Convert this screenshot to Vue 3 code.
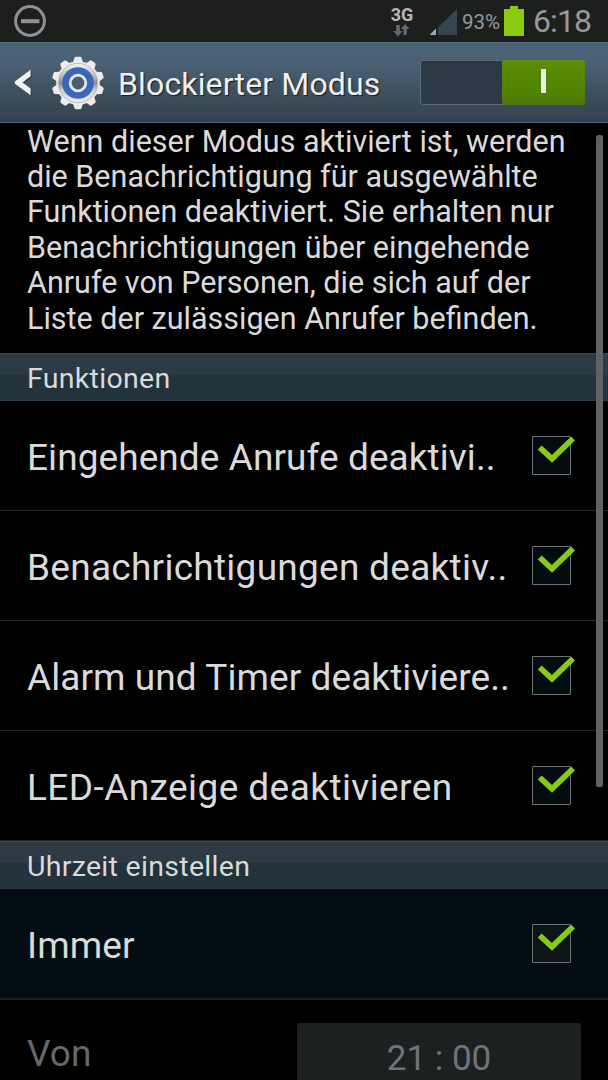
<template>
  <div class="screen">
    <header class="status-bar">
      <svg class="status-block" viewBox="0 0 34 34">
        <circle cx="17" cy="17" r="14.4" fill="none" stroke="#8f9193" stroke-width="3" />
        <rect x="8" y="15.2" width="18.4" height="4" fill="#8f9193" />
      </svg>
      <div class="network">
        <span class="network-type">3G</span>
        <svg class="network-arrows" viewBox="0 0 18 13">
          <path d="M3.2 1h3.6v6H9.6L5 12.4.4 7h2.8z" fill="#64696c" />
          <path d="M10.4 11h3.4V5h2.8L12.1 0 7.8 5h2.6z" fill="#64696c" />
        </svg>
      </div>
      <svg class="signal" viewBox="0 0 29 28">
        <path d="M9 27V19.5L28 1v26z" fill="#354551" />
        <path d="M.5 27L7 20.5V27z" fill="#a5a7a8" />
      </svg>
      <span class="percent">93%</span>
      <svg class="battery" viewBox="0 0 20 30">
        <path d="M6 0h8v3h6v27H0V3h6z" fill="#8acb12" />
      </svg>
      <span class="clock">6:18</span>
    </header>

    <div class="action-bar">
      <svg class="back" viewBox="0 0 18 28">
        <path d="M17.3 1.5v6.8L9 14.5l8.3 5.7v6.8L1.3 15.6v-2z" fill="#24313b" />
        <path d="M16.6 .7v6.6L8.6 13.6l8 6V26.2L.8 14.8v-2.2z" fill="#f2f2f2" />
      </svg>
      <svg class="gear" viewBox="-27 -27 54 54">
        <defs>
          <linearGradient id="metal" x1="0" y1="0" x2="0" y2="1">
            <stop offset="0" stop-color="#f4f4f4" />
            <stop offset="0.3" stop-color="#c2c2c2" />
            <stop offset="0.5" stop-color="#8e8e8e" />
            <stop offset="0.7" stop-color="#d0d0d0" />
            <stop offset="1" stop-color="#f0f0f0" />
          </linearGradient>
        </defs>
        <circle r="21.8" fill="#ececec" />
        <path
          v-for="n in 10"
          :key="n"
          d="M-5.2 -20L-3.4 -25.4Q-3 -26.2 -2 -26.2H2Q3 -26.2 3.4 -25.4L5.2 -20z"
          fill="#ececec"
          :transform="`rotate(${n * 36})`"
        />
        <circle r="19.7" fill="url(#metal)" stroke="#b4b4b4" stroke-width="0.8" />
        <circle r="15.8" fill="#3c66bc" />
        <circle r="7.8" fill="#4b5f70" stroke="#e6e6e6" stroke-width="2.8" />
      </svg>
      <h1 class="title">Blockierter Modus</h1>
      <button class="switch" type="button" @click="enabled = !enabled">
        <span class="switch-thumb" :class="{ off: !enabled }"><i></i></span>
      </button>
    </div>

    <main class="content">
      <p class="description">
        <span v-for="line in description" :key="line">{{ line }}</span>
      </p>

      <h2 class="section">Funktionen</h2>
      <div v-for="item in features" :key="item.label" class="row" @click="item.checked = !item.checked">
        <span class="label" :style="{ letterSpacing: item.spacing + 'px' }">{{ item.label }}</span>
        <span class="checkbox">
          <svg v-if="item.checked" viewBox="0 0 46 42">
            <path d="M8.7 12.5L21 23.8L42 3.5" fill="none" stroke="#86cc14" stroke-width="5.6" />
          </svg>
        </span>
      </div>

      <h2 class="section">Uhrzeit einstellen</h2>
      <div class="row always" @click="always = !always">
        <span class="label">Immer</span>
        <span class="checkbox">
          <svg v-if="always" viewBox="0 0 46 42">
            <path d="M8.7 12.5L21 23.8L42 3.5" fill="none" stroke="#86cc14" stroke-width="5.6" />
          </svg>
        </span>
      </div>
      <div class="from">
        <span class="label">Von</span>
        <span class="time-button">21 : 00</span>
      </div>
    </main>

    <div class="scrollbar"></div>
  </div>
</template>

<script setup>
import { ref } from 'vue';

const enabled = ref(true);
const always = ref(true);

const description = [
  'Wenn dieser Modus aktiviert ist, werden',
  'die Benachrichtigung für ausgewählte',
  'Funktionen deaktiviert. Sie erhalten nur',
  'Benachrichtigungen über eingehende',
  'Anrufe von Personen, die sich auf der',
  'Liste der zulässigen Anrufer befinden.',
];

const features = ref([
  { label: 'Eingehende Anrufe deaktivi..', checked: true, spacing: 0.07 },
  { label: 'Benachrichtigungen deaktiv..', checked: true, spacing: 0.27 },
  { label: 'Alarm und Timer deaktiviere..', checked: true, spacing: 0.07 },
  { label: 'LED-Anzeige deaktivieren', checked: true, spacing: 0.42 },
]);
</script>

<style>
body {
  background: #000;
}
</style>

<style scoped>
.screen {
  position: relative;
  width: 608px;
  height: 1080px;
  overflow: hidden;
  background: #000;
  color: #dadada;
  font-family: Roboto, sans-serif;
}
.status-bar {
  display: flex;
  align-items: flex-start;
  box-sizing: border-box;
  height: 42px;
  padding-left: 13px;
  background: #1d1f1f;
  color: #97999b;
}
.status-block {
  width: 34px;
  height: 34px;
  margin-top: 4px;
}
.network {
  display: flex;
  flex-direction: column;
  align-items: center;
  width: 26px;
  margin: 6px 0 0 342px;
}
.network-type {
  font-size: 18px;
  font-weight: 700;
  line-height: 18px;
  color: #b6b8b9;
}
.network-arrows {
  width: 18px;
  height: 13px;
}
.signal {
  width: 29px;
  height: 28px;
  margin: 8px 0 0 14px;
}
.percent {
  width: 38px;
  margin: 10px 0 0 4px;
  font-size: 20.5px;
  line-height: 24px;
  white-space: nowrap;
}
.battery {
  width: 20px;
  height: 30px;
  margin: 6px 0 0 4px;
}
.clock {
  margin: 3px 0 0 9px;
  font-size: 32px;
  line-height: 36px;
  letter-spacing: -0.9px;
}
.action-bar {
  display: flex;
  align-items: center;
  box-sizing: border-box;
  height: 81px;
  padding: 0 23px 0 14px;
  background: linear-gradient(#4c6478 0%, #4a6175 25%, #3f515f 60%, #33424f 100%);
  border-top: 1px solid #566f84;
  border-bottom: 1px solid #46617a;
}
.back {
  flex: none;
  width: 18px;
  height: 28px;
}
.gear {
  flex: none;
  width: 54px;
  height: 54px;
  margin-left: 18.5px;
}
.title {
  flex: 1;
  margin: 2px 0 0 13.5px;
  font-size: 32px;
  font-weight: 400;
  line-height: 40px;
  letter-spacing: 0.15px;
  color: #f0f0f0;
  text-shadow: 1px 1px 1px #111a20;
  white-space: nowrap;
}
.switch {
  display: flex;
  justify-content: flex-end;
  box-sizing: border-box;
  width: 165px;
  height: 45px;
  padding: 0;
  background: #2d3a45;
  border: 1px solid #5e6a72;
  border-radius: 3px;
}
.switch-thumb {
  display: flex;
  align-items: center;
  justify-content: center;
  width: 83px;
  height: 45px;
  margin: -1px -1px 0 0;
  background: linear-gradient(#5d9107 0%, #558800 30%, #528300 75%, #4a720a 100%);
  border-radius: 3px;
}
.switch-thumb.off {
  margin-right: auto;
  background: #4a5560;
}
.switch-thumb i {
  width: 5px;
  height: 24px;
  margin-bottom: 3px;
  background: #ececec;
}
.description {
  box-sizing: border-box;
  margin: 0;
  height: 230px;
  padding: 0.6px 0 0 27px;
  font-size: 30.5px;
  line-height: 35.4px;
  white-space: nowrap;
}
.description span {
  display: block;
}
.section {
  box-sizing: border-box;
  height: 48px;
  margin: 0;
  padding-left: 27px;
  font-size: 28.5px;
  font-weight: 400;
  line-height: 49px;
  letter-spacing: 0.3px;
  background: linear-gradient(#2d3944 0%, #2d3944 44%, #23333c 46%, #23333c 100%);
  border-top: 1px solid #344957;
  border-bottom: 1px solid #2b3943;
}
.row {
  display: flex;
  align-items: center;
  justify-content: space-between;
  box-sizing: border-box;
  height: 110px;
  padding: 0 37px 0 27px;
  border-bottom: 1px solid #242424;
}
.label {
  padding-top: 5px;
  font-size: 37px;
  line-height: 44px;
  letter-spacing: 0.1px;
  white-space: nowrap;
}
.checkbox {
  box-sizing: border-box;
  flex: none;
  width: 39px;
  height: 39px;
  background: #050c0f;
  border: 1px solid #6d7275;
  border-radius: 1px;
}
.checkbox svg {
  display: block;
  width: 46px;
  height: 42px;
  margin: -2px 0 0 -2px;
}
.row.always {
  height: 111px;
  background: #020e13;
  border-bottom: 2px solid #1b2022;
}
.always .checkbox {
  background: #0d1517;
}
.from {
  display: flex;
  align-items: flex-start;
  justify-content: space-between;
  padding: 23px 27px 0;
  color: #64686a;
}
.from .label {
  padding-top: 9px;
}
.time-button {
  width: 284px;
  height: 74px;
  background: #1d2021;
  border-radius: 3px;
  color: #717476;
  font-size: 35px;
  line-height: 71px;
  text-align: center;
}
.scrollbar {
  position: absolute;
  top: 135px;
  right: 5px;
  width: 7px;
  height: 652px;
  background: #5f6163;
  border-radius: 2px;
}
</style>
